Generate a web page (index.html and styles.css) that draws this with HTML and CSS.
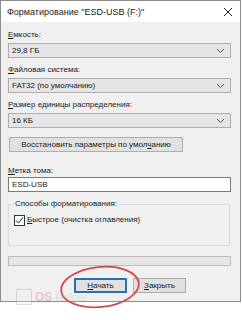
FILE: index.html
```html
<!DOCTYPE html>
<html lang="ru">
<head>
  <meta charset="UTF-8" />
  <meta name="viewport" content="width=device-width, initial-scale=1.0" />
  <title>Форматирование</title>
  <link rel="stylesheet" href="styles.css">
</head>
<body>
  <div class="window">
    <div class="titlebar">
      <span class="title">Форматирование "ESD-USB (F:)"</span>
      <svg class="close" width="10" height="10" viewBox="0 0 10 10"><path d="M1 1L9 9M9 1L1 9" stroke="#222" stroke-width="1"/></svg>
    </div>
    <div class="body">
      <div class="label first"><u>Е</u>мкость:</div>
      <div class="combo"><span>29,8 ГБ</span><svg width="9" height="6" viewBox="0 0 9 6"><path d="M1 1L4.5 4.5L8 1" fill="none" stroke="#555"/></svg></div>

      <div class="label"><u>Ф</u>айловая система:</div>
      <div class="combo"><span>FAT32 (по умолчанию)</span><svg width="9" height="6" viewBox="0 0 9 6"><path d="M1 1L4.5 4.5L8 1" fill="none" stroke="#555"/></svg></div>

      <div class="label"><u>Р</u>азмер единицы распределения:</div>
      <div class="combo"><span>16 КБ</span><svg width="9" height="6" viewBox="0 0 9 6"><path d="M1 1L4.5 4.5L8 1" fill="none" stroke="#555"/></svg></div>

      <div class="btn restore"><span>Восстановить параметры по умол<u>ч</u>анию</span></div>

      <div class="label volume"><u>М</u>етка тома:</div>
      <div class="textbox">ESD-USB</div>

      <fieldset class="group">
        <legend>Способы форматирования:</legend>
        <div class="check">
          <span class="box"><svg width="9" height="9" viewBox="0 0 9 9"><path d="M1 4.5L3.5 7L8 1.5" fill="none" stroke="#222" stroke-width="1"/></svg></span>
          <span><u>Б</u>ыстрое (очистка оглавления)</span>
        </div>
      </fieldset>

      <div class="progress"></div>

      <div class="actions">
        <div class="btn default"><span><u>Н</u>ачать</span></div>
        <div class="btn"><span><u>З</u>акрыть</span></div>
      </div>
    </div>
  </div>

  <svg class="mark" width="90" height="50" viewBox="0 0 90 50">
    <ellipse cx="45" cy="25" rx="39" ry="20" transform="rotate(-6 45 25)" fill="none" stroke="#d24a4a" stroke-width="1.8"/>
  </svg>

  <div class="watermark">
    <span class="wm-icon"></span>
    <span class="wm-os">OS</span>
    <span class="wm-text">Helper</span>
  </div>
</body>
</html>
```

FILE: styles.css
```css
body {
  margin: 0;
  background: #fff;
  font-family: "Liberation Sans", Arial, sans-serif;
  font-size: 8px;
  color: #1a1a1a;
}
.window {
  position: relative;
  width: 241px;
  height: 302px;
  box-sizing: border-box;
  border: 1px solid #8c8c8c;
  background: #f0f0f0;
}
.titlebar {
  height: 21px;
  background: #fff;
  display: flex;
  align-items: center;
  justify-content: space-between;
  padding: 0 6px;
}
.title {
  font-size: 9px;
}
.close {
  margin-right: 1px;
}
.body {
  padding: 0 9px 0 7px;
}
.label {
  line-height: 12px;
  margin-top: 6px;
}
.label.first {
  margin-top: 7px;
}
.label.volume {
  margin-top: 13px;
}
.combo {
  margin-top: 2px;
  height: 15px;
  box-sizing: border-box;
  border: 1px solid #adadad;
  background: #e5e5e5;
  display: flex;
  align-items: center;
  justify-content: space-between;
  padding: 0 5px 0 3px;
}
.btn {
  height: 15px;
  box-sizing: border-box;
  border: 1px solid #adadad;
  background: #e1e1e1;
  display: flex;
  align-items: center;
  justify-content: center;
  white-space: nowrap;
}
.restore {
  margin: 9px 0 0 1px;
  width: 174px;
}
.textbox {
  height: 15px;
  box-sizing: border-box;
  border: 1px solid #7a7a7a;
  background: #fff;
  display: flex;
  align-items: center;
  padding: 0 3px;
}
.group {
  margin: 6px 1px 0 0;
  padding: 4px 6px 19px 5px;
  border: 1px solid #dcdcdc;
  min-width: 0;
}
.group legend {
  padding: 0 1px;
  line-height: 12px;
}
.check {
  display: flex;
  align-items: center;
  gap: 2px;
  line-height: 12px;
}
.box {
  width: 9px;
  height: 9px;
  border: 1px solid #333;
  background: #fff;
  display: flex;
}
.progress {
  margin-top: 10px;
  height: 10px;
  box-sizing: border-box;
  border: 1px solid #bcbcbc;
  background: #e6e6e6;
}
.actions {
  display: flex;
  gap: 6px;
  margin: 12px 0 0 66px;
}
.actions .btn {
  width: 53px;
}
.actions .btn.default {
  border: 2px solid #2a6fb0;
}
.mark {
  position: absolute;
  left: 55px;
  top: 262px;
}
.watermark {
  position: absolute;
  left: 16px;
  top: 289px;
  display: flex;
  align-items: center;
  gap: 3px;
  opacity: 0.3;
}
.wm-icon {
  width: 14px;
  height: 14px;
  border: 1px solid #999;
  background: #eee;
}
.wm-os {
  color: #d66;
  font-weight: bold;
  font-size: 12px;
}
.wm-text {
  color: #bbb;
  font-size: 11px;
}
```
